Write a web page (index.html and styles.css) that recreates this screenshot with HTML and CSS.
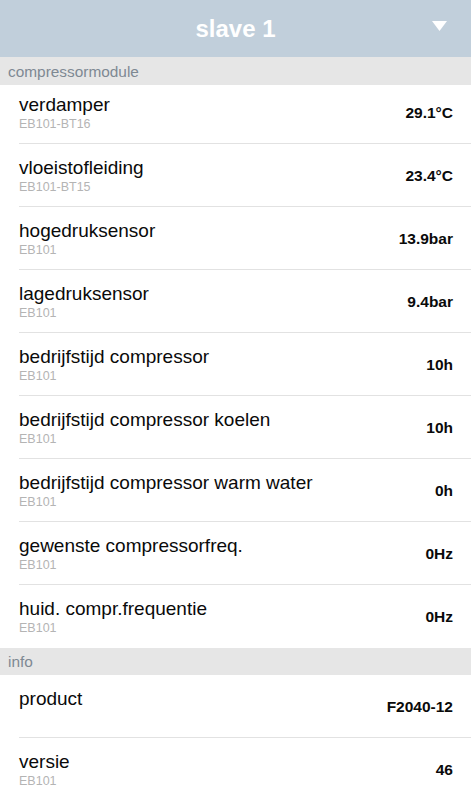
FILE: index.html
```html
<!DOCTYPE html>
<html lang="nl">
<head>
<meta charset="utf-8">
<title>slave 1</title>
<link rel="stylesheet" href="styles.css">
</head>
<body>
<header class="topbar">
  <h1 class="topbar__title">slave 1</h1>
  <svg class="topbar__caret" width="15" height="10" viewBox="0 0 15 10"><polygon points="0,0 15,0 7.5,10" fill="#fff"/></svg>
</header>

<section class="group">
  <div class="group__head">compressormodule</div>
  <ul class="list">
    <li class="row row--first"><div class="row__text"><div class="row__title">verdamper</div><div class="row__sub">EB101-BT16</div></div><div class="row__value">29.1°C</div></li>
    <li class="row"><div class="row__text"><div class="row__title">vloeistofleiding</div><div class="row__sub">EB101-BT15</div></div><div class="row__value">23.4°C</div></li>
    <li class="row"><div class="row__text"><div class="row__title">hogedruksensor</div><div class="row__sub">EB101</div></div><div class="row__value">13.9bar</div></li>
    <li class="row"><div class="row__text"><div class="row__title">lagedruksensor</div><div class="row__sub">EB101</div></div><div class="row__value">9.4bar</div></li>
    <li class="row"><div class="row__text"><div class="row__title">bedrijfstijd compressor</div><div class="row__sub">EB101</div></div><div class="row__value">10h</div></li>
    <li class="row"><div class="row__text"><div class="row__title">bedrijfstijd compressor koelen</div><div class="row__sub">EB101</div></div><div class="row__value">10h</div></li>
    <li class="row"><div class="row__text"><div class="row__title">bedrijfstijd compressor warm water</div><div class="row__sub">EB101</div></div><div class="row__value">0h</div></li>
    <li class="row"><div class="row__text"><div class="row__title">gewenste compressorfreq.</div><div class="row__sub">EB101</div></div><div class="row__value">0Hz</div></li>
    <li class="row"><div class="row__text"><div class="row__title">huid. compr.frequentie</div><div class="row__sub">EB101</div></div><div class="row__value">0Hz</div></li>
  </ul>
</section>

<section class="group">
  <div class="group__head group__head--short">info</div>
  <ul class="list">
    <li class="row"><div class="row__text"><div class="row__title">product</div><div class="row__sub"></div></div><div class="row__value">F2040-12</div></li>
    <li class="row"><div class="row__text"><div class="row__title">versie</div><div class="row__sub">EB101</div></div><div class="row__value">46</div></li>
  </ul>
</section>
</body>
</html>
```

FILE: styles.css
```css
html, body {
  margin: 0;
  padding: 0;
}
body {
  font-family: "Liberation Sans", Arial, Helvetica, sans-serif;
  background: #fff;
  color: #000;
  overflow: hidden;
}
.topbar {
  position: relative;
  height: 57px;
  background: #c1cfdb;
  display: flex;
  align-items: center;
  justify-content: center;
}
.topbar__title {
  margin: 0;
  font-size: 24px;
  font-weight: bold;
  color: #fff;
  line-height: 28px;
}
.topbar__caret {
  position: absolute;
  left: 432px;
  top: 21px;
}
.group__head {
  background: #e6e6e6;
  color: #7e8993;
  font-size: 15.4px;
  height: 28px;
  line-height: 29px;
  padding-left: 8px;
}
.group__head--short {
  height: 27px;
  line-height: 28px;
}
.list {
  list-style: none;
  margin: 0;
  padding: 0;
}
.row {
  display: flex;
  align-items: center;
  justify-content: space-between;
  margin-left: 19px;
  padding: 13px 18px 11px 0;
  border-bottom: 1px solid #e2e2e2;
}
.row:last-child {
  border-bottom: none;
  padding-bottom: 12px;
}
.row--first {
  padding-top: 9px;
}
.row__title {
  font-size: 19px;
  line-height: 22px;
  color: #0a0a0a;
}
.row__sub {
  font-size: 12.5px;
  line-height: 16px;
  height: 16px;
  color: #b4b4b4;
}
.row__value {
  font-size: 15.5px;
  font-weight: bold;
  color: #0a0a0a;
}
```
